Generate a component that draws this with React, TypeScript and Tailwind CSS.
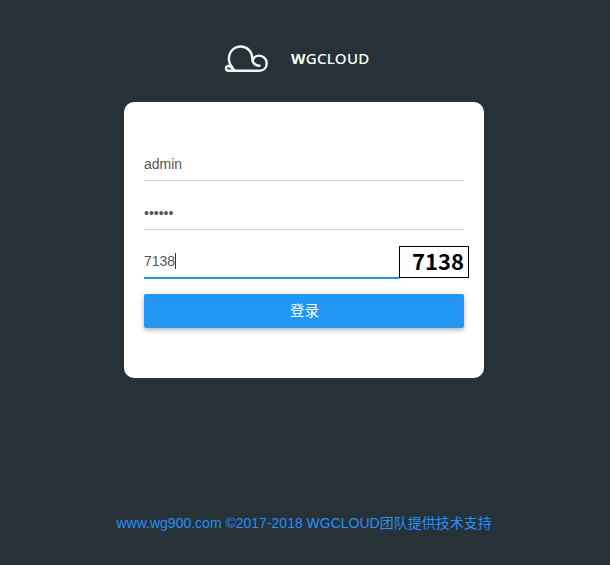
import React from 'react';

function SnailCloud() {
  return (
    <svg className="h-[30px] w-[46px]" viewBox="0 0 46 30" fill="none" stroke="#f5f3f3" strokeWidth="2.4" strokeLinecap="round" strokeLinejoin="round">
      <path d="M8.6 23.6C6.2 21.2 4.9 18.1 4.9 14.4C4.9 7.8 10.1 2.5 16.6 2.5C23.2 2.5 28.2 7.7 28.2 13.9C28.2 18.4 31.2 22.1 35.6 21.8" />
      <path d="M28.6 16.2C29.8 13.3 32.2 11.6 35 11.6C39.4 11.6 42.7 15 42.7 19.2C42.7 23.7 39.6 26.7 35.3 26.7H4.8C3.1 26.7 2 25.9 2 24.5C2 23 3 22 4.4 22C6.2 22 7.3 23.4 8.5 24.6C9.5 25.7 10.7 26.5 12.2 26.7" />
    </svg>
  );
}

export default function App() {
  return (
    <div className="flex h-[565px] w-[610px] flex-col overflow-hidden bg-[#263238] pt-11 font-['Liberation_Sans','Noto_Sans_CJK_SC',sans-serif] text-sm text-[#555]">
      <header className="ml-[224px] flex h-[30px] items-center">
        <SnailCloud />
        <h1 className="ml-[21px] whitespace-nowrap pb-0.5 font-['Noto_Sans',sans-serif] text-[15px] font-medium leading-[28px] tracking-[0.3px] text-white">
          <span className="font-bold">W</span>GCLOUD
        </h1>
      </header>

      <main className="ml-[124px] mt-7 h-[276px] w-[360px] rounded-[10px] bg-white px-5 pt-[45px]">
        <div className="flex h-[34px] items-center border-b border-[#cfd4de]">admin</div>
        <div className="mt-[15px] flex h-[34px] items-center border-b border-[#cfd8dc]">••••••</div>
        <div className="mt-[14px] flex h-[35px] w-[325px] items-end">
          <div className="flex h-[35px] w-[255px] items-center border-b-2 border-[#2196f3]">
            7138<span className="h-4 w-px bg-[#333]" />
          </div>
          <div className="mb-px flex h-8 w-[70px] items-center justify-end border border-black bg-[#fefefe] pb-[4px] pr-[4px] font-['Noto_Sans_CJK_SC',sans-serif] text-[22px] font-bold leading-none text-black">
            7138
          </div>
        </div>
        <button className="mt-[15px] flex h-[34px] w-full items-center justify-center rounded-[2px] bg-[#2196f3] pl-px text-[14.5px] text-white shadow-[0_2px_5px_rgba(0,0,0,0.3)]">
          登录
        </button>
      </main>

      <footer className="ml-[116.5px] mt-[135px] whitespace-nowrap leading-5 text-[#2690f8]">
        www.wg900.com ©2017-2018 WGCLOUD团队提供技术支持
      </footer>
    </div>
  );
}
